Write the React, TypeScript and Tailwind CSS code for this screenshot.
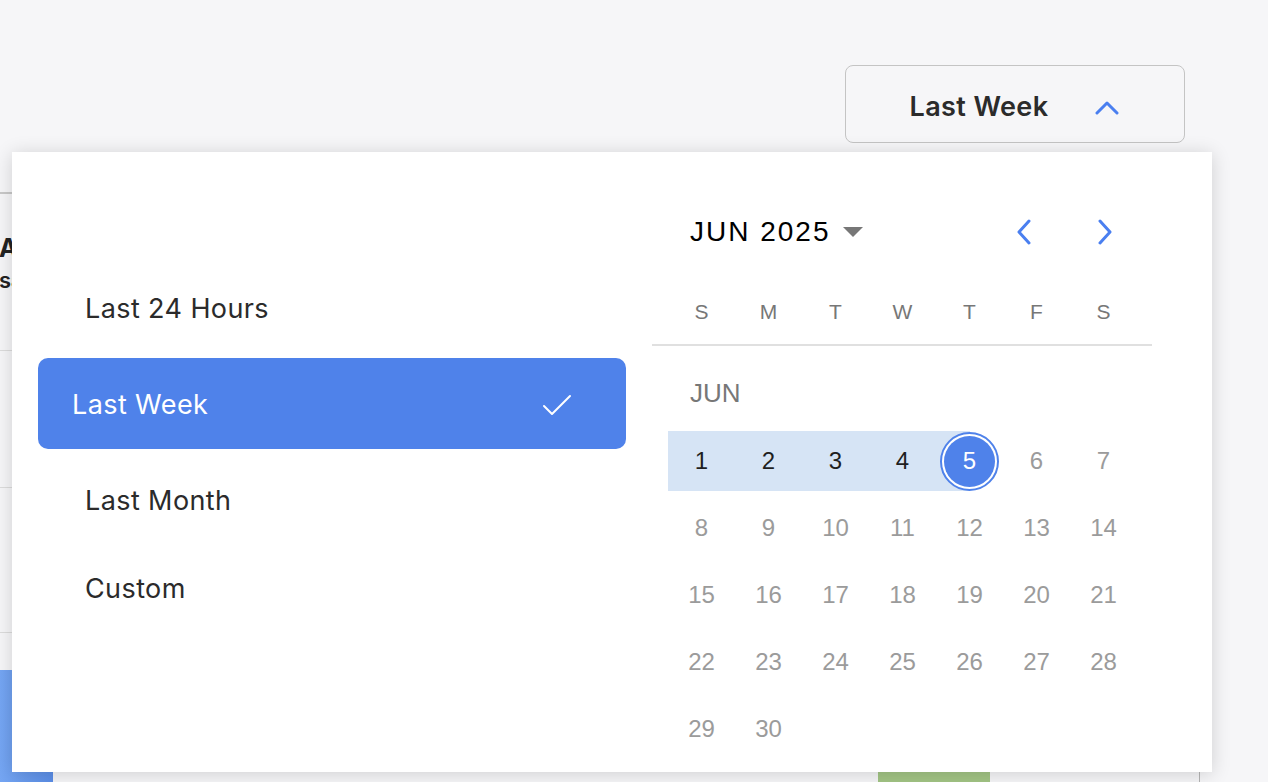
import React from "react"

const sans = { fontFamily: "Inter, 'Noto Sans', sans-serif" }
const helv = { fontFamily: "'Liberation Sans', Arial, sans-serif" }

const presets = ["Last 24 Hours", "Last Week", "Last Month", "Custom"]
const weekdays = ["S", "M", "T", "W", "T", "F", "S"]

const ChevronUp = () => (
  <svg width="24" height="15" viewBox="0 0 24 15" fill="none">
    <polyline points="2,13 12,3 22,13" stroke="#4a7ff0" strokeWidth="3" strokeLinecap="round" strokeLinejoin="round" />
  </svg>
)

const ChevronSide = ({ dir }: { dir: "left" | "right" }) => (
  <svg width="18" height="26" viewBox="0 0 18 26" fill="none">
    <polyline
      points={dir === "left" ? "14,2 4,13 14,24" : "4,2 14,13 4,24"}
      stroke="#4a7ff0"
      strokeWidth="3"
      strokeLinecap="round"
      strokeLinejoin="round"
    />
  </svg>
)

const Check = () => (
  <svg width="30" height="22" viewBox="0 0 30 22" fill="none">
    <polyline points="2,12 10,20 28,2" stroke="#ffffff" strokeWidth="2" strokeLinecap="round" strokeLinejoin="round" />
  </svg>
)

const Caret = () => (
  <svg width="20" height="10" viewBox="0 0 20 10">
    <polygon points="0,0 20,0 10,10" fill="#777777" />
  </svg>
)

const DayCell = ({ d }: { d: number }) => {
  if (d <= 4) {
    return (
      <div className="flex h-[60px] items-center justify-center bg-[#d6e4f5] text-[24px] text-[#1f1f1f]">
        {d}
      </div>
    )
  }
  if (d === 5) {
    return (
      <div className="flex h-[60px] items-center justify-center bg-[linear-gradient(to_right,#d6e4f5_50%,transparent_50%)]">
        <div className="h-[59px] w-[59px] rounded-full border-2 border-[#4f82ea] bg-white p-[2px]">
          <div className="flex h-full w-full items-center justify-center rounded-full bg-[#4f82ea] text-[24px] text-white">
            5
          </div>
        </div>
      </div>
    )
  }
  return (
    <div className="flex h-[60px] items-center justify-center text-[24px] text-[#9b9b9b]">{d}</div>
  )
}

function Calendar() {
  const days = Array.from({ length: 30 }, (_, i) => i + 1)
  return (
    <div className="w-[500px] pt-[57px]" style={helv}>
      <div className="flex h-[46px] items-center">
        <div className="flex items-center gap-[12px] pl-[38px]">
          <span className="text-[28px] tracking-[2px] text-black">JUN 2025</span>
          <Caret />
        </div>
        <div className="ml-auto flex items-center gap-[63px] pr-[38px]">
          <ChevronSide dir="left" />
          <ChevronSide dir="right" />
        </div>
      </div>
      <div className="ml-[16px] mt-[46px] grid w-[469px] grid-cols-7 text-[21px] text-[#777]">
        {weekdays.map((w, i) => (
          <div key={i} className="flex h-[22px] items-center justify-center">
            {w}
          </div>
        ))}
      </div>
      <div className="mt-[21px] h-[2px] w-[500px] bg-[#e0e0e0]" />
      <div className="mt-[32px] pl-[38px] text-[26px] leading-[30px] text-[#777]">JUN</div>
      <div className="ml-[16px] mt-[23px] grid w-[469px] grid-cols-7 gap-y-[7px]">
        {days.map((d) => (
          <DayCell key={d} d={d} />
        ))}
      </div>
    </div>
  )
}

function PresetList() {
  return (
    <div className="flex w-[640px] flex-col gap-[5px] pl-[26px] pt-[110px]" style={sans}>
      {presets.map((p) =>
        p === "Last Week" ? (
          <div
            key={p}
            className="flex h-[91px] w-[588px] items-center justify-between rounded-[10px] bg-[#4f82ea] pl-[34px] pr-[54px] pt-[3px] text-[27px] tracking-[0.4px] text-white"
          >
            <span>{p}</span>
            <Check />
          </div>
        ) : (
          <div
            key={p}
            className={`flex w-[588px] items-center pl-[47px] pt-[3px] text-[27px] tracking-[0.4px] text-[#2b2b2b] ${p === "Custom" ? "h-[76px]" : "h-[91px]"}`}
          >
            {p}
          </div>
        )
      )}
    </div>
  )
}

export default function App() {
  return (
    <div className="relative h-[782px] w-[1268px] overflow-hidden bg-[#f6f6f8]" style={sans}>
      {/* header */}
      <div className="flex justify-end pr-[83px] pt-[65px]">
        <button className="flex h-[78px] w-[340px] items-center justify-center gap-[46px] rounded-[8px] border-[1.5px] border-[#c4c4c4] pr-[2px] pt-[6px] text-[27px] font-semibold tracking-[0.4px] text-[#2b2b2b]">
          <span>Last Week</span>
          <ChevronUp />
        </button>
      </div>

      {/* page content behind the popover */}
      <div className="mt-[49px] w-[1200px] border-r border-[#b5b5b5]">
        <div className="border-t-[2px] border-[#c8c8c8]">
          <div className="-ml-[1px] pt-[37px] text-[25px] font-bold leading-[34px] text-[#222]">AVG ORDER</div>
          <div className="-ml-[1px] text-[22px] font-semibold leading-[30px] text-[#222]">sales count</div>
        </div>
        <div className="mt-[55px] h-[1px] w-[12px] bg-[#dcdcdc]" />
        <div className="mt-[136px] h-[1px] w-[12px] bg-[#dcdcdc]" />
        <div className="mt-[144px] h-[1px] w-[12px] bg-[#dcdcdc]" />
        <div className="mt-[37px] flex h-[120px] items-start">
          <div className="h-full w-[53px] bg-[linear-gradient(to_right,#75a6f3,#5b8ee8)]" />
          <div className="ml-[825px] mt-[102px] h-[20px] w-[112px] bg-[#a3c585]" />
        </div>
      </div>

      {/* popover */}
      <div className="absolute left-[12px] top-[152px] flex h-[620px] w-[1200px] bg-white shadow-[0_2px_18px_rgba(0,0,0,0.16)]">
        <PresetList />
        <Calendar />
      </div>
    </div>
  )
}
